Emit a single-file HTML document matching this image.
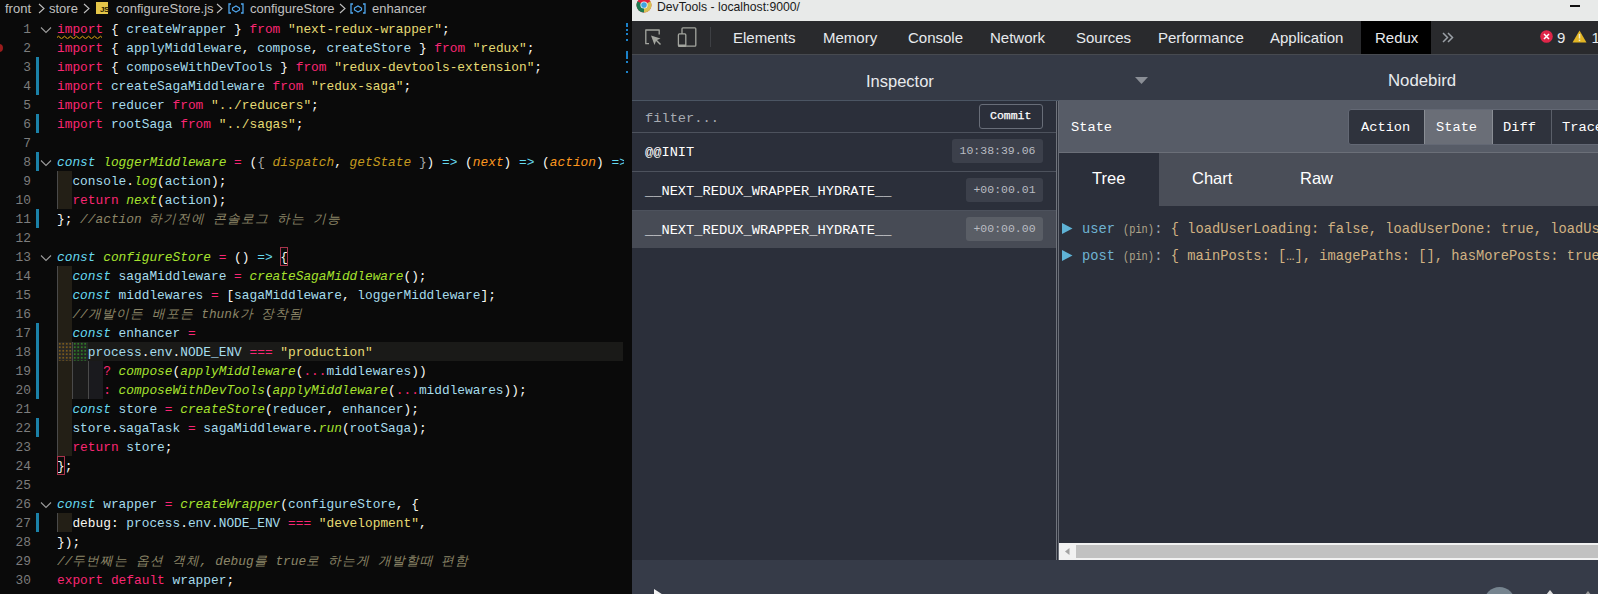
<!DOCTYPE html>
<html><head><meta charset="utf-8">
<style>
*{margin:0;padding:0;box-sizing:border-box}
html,body{width:1598px;height:594px;overflow:hidden;background:#0a0a0a;font-family:"Liberation Sans",sans-serif}
.abs{position:absolute}
#ed{position:absolute;left:0;top:0;width:632px;height:594px;background:#0a0a0a;overflow:hidden}
.crumb{position:absolute;top:0;height:17px;line-height:17px;font-size:13px;color:#c0c0c0;white-space:nowrap}
.ln{position:absolute;left:0;width:31px;text-align:right;font-family:"Liberation Mono",monospace;font-size:12.83px;color:#7d7d7d;height:19px;line-height:19px}
.cl{position:absolute;left:57px;width:567px;overflow:hidden;height:19px;line-height:19px;font-family:"Liberation Mono",monospace;font-size:12.83px;color:#f8f8f2;white-space:pre}
.k{color:#f92672}.s{color:#e6db74}.v{color:#a6dcec}.c{color:#66d9ef;font-style:italic}.f{color:#a6e22e;font-style:italic}.p{color:#fd971f;font-style:italic}.pd{color:#c49a1e;font-style:italic}.g{color:#a8a8a8}.o{color:#f92672}.a{color:#66d9ef}.cm{color:#8c8668;font-style:italic}.ko{letter-spacing:1px}.w{color:#f8f8f2}
.gb{position:absolute;left:36px;width:3px;background:#1b81a8}
.ig{position:absolute;left:57px;width:15px;height:19px;background:#231f16;border-left:1px solid #4a4a4a}
#dt{position:absolute;left:632px;top:0;width:966px;height:594px;background:#2b2f3a;overflow:hidden}
.tab{position:absolute;top:21px;height:33px;line-height:33px;font-size:15px;color:#e8eaed;white-space:nowrap}
.mono{font-family:"Liberation Mono",monospace}
</style></head><body>
<div id="ed">

<div class="crumb" style="left:5px">front</div>
<svg class="abs" style="left:38px;top:3px" width="7" height="11"><path d="M1 1 L6 5.5 L1 10" stroke="#c0c0c0" stroke-width="1.1" fill="none"/></svg>
<div class="crumb" style="left:49px">store</div>
<svg class="abs" style="left:83px;top:3px" width="7" height="11"><path d="M1 1 L6 5.5 L1 10" stroke="#c0c0c0" stroke-width="1.1" fill="none"/></svg>
<div class="abs" style="left:96px;top:2px;width:12px;height:12px;background:#e5c649"></div>
<div class="abs" style="left:100px;top:6px;font-size:8px;line-height:8px;color:#2a2200;font-weight:bold;letter-spacing:-0.5px">JS</div>
<div class="crumb" style="left:116px">configureStore.js</div>
<svg class="abs" style="left:216px;top:3px" width="7" height="11"><path d="M1 1 L6 5.5 L1 10" stroke="#c0c0c0" stroke-width="1.1" fill="none"/></svg>
<svg class="abs" style="left:228px;top:3px" width="16" height="11"><path d="M3 1 H1 V10 H3 M13 1 H15 V10 H13" stroke="#4fa6ed" stroke-width="1.3" fill="none"/><path d="M4.5 5 L8 3 L11.5 5 V7 L8 9 L4.5 7 Z" stroke="#4fa6ed" stroke-width="1.2" fill="none"/></svg>
<div class="crumb" style="left:250px">configureStore</div>
<svg class="abs" style="left:339px;top:3px" width="7" height="11"><path d="M1 1 L6 5.5 L1 10" stroke="#c0c0c0" stroke-width="1.1" fill="none"/></svg>
<svg class="abs" style="left:350px;top:3px" width="16" height="11"><path d="M3 1 H1 V10 H3 M13 1 H15 V10 H13" stroke="#4fa6ed" stroke-width="1.3" fill="none"/><path d="M4.5 5 L8 3 L11.5 5 V7 L8 9 L4.5 7 Z" stroke="#4fa6ed" stroke-width="1.2" fill="none"/></svg>
<div class="crumb" style="left:372px">enhancer</div>
<div class="abs" style="left:57px;top:342px;width:566px;height:19px;background:#1a1a18"></div>
<div class="ig" style="top:171px"></div>
<div class="ig" style="top:190px"></div>
<div class="ig" style="top:266px"></div>
<div class="ig" style="top:285px"></div>
<div class="ig" style="top:304px"></div>
<div class="ig" style="top:323px"></div>
<div class="ig" style="top:342px;background:#2a2824;background-image:radial-gradient(#7a5a1c 0.7px, transparent 0.9px);background-size:3.5px 3.5px"></div>
<div class="ig" style="top:361px"></div>
<div class="ig" style="top:380px"></div>
<div class="ig" style="top:399px"></div>
<div class="ig" style="top:418px"></div>
<div class="ig" style="top:437px"></div>
<div class="ig" style="top:513px"></div>
<div class="abs" style="left:72px;top:342px;width:16px;height:19px;background:#222422;background-image:radial-gradient(#2d7a26 0.7px, transparent 0.9px);background-size:3.5px 3.5px;border-left:1px solid #4a4a4a"></div>
<div class="abs" style="left:72px;top:361px;width:16px;height:19px;background:#1b1b1b;border-left:1px solid #4a4a4a"></div>
<div class="abs" style="left:72px;top:380px;width:16px;height:19px;background:#1b1b1b;border-left:1px solid #4a4a4a"></div>
<div class="abs" style="left:88px;top:361px;width:15px;height:19px;background:#1a1a1e;border-left:1px solid #4a4a4a"></div>
<div class="abs" style="left:88px;top:380px;width:15px;height:19px;background:#1a1a1e;border-left:1px solid #4a4a4a"></div>
<div class="gb" style="top:57px;height:38px"></div>
<div class="gb" style="top:114px;height:19px"></div>
<div class="gb" style="top:152px;height:19px"></div>
<div class="gb" style="top:209px;height:19px"></div>
<div class="gb" style="top:323px;height:76px"></div>
<div class="gb" style="top:418px;height:19px"></div>
<div class="gb" style="top:513px;height:19px"></div>
<svg class="abs" style="left:40px;top:26px" width="12" height="8"><path d="M1 1.5 L6 6.5 L11 1.5" stroke="#9c9c9c" stroke-width="1.1" fill="none"/></svg>
<svg class="abs" style="left:40px;top:159px" width="12" height="8"><path d="M1 1.5 L6 6.5 L11 1.5" stroke="#9c9c9c" stroke-width="1.1" fill="none"/></svg>
<svg class="abs" style="left:40px;top:254px" width="12" height="8"><path d="M1 1.5 L6 6.5 L11 1.5" stroke="#9c9c9c" stroke-width="1.1" fill="none"/></svg>
<svg class="abs" style="left:40px;top:501px" width="12" height="8"><path d="M1 1.5 L6 6.5 L11 1.5" stroke="#9c9c9c" stroke-width="1.1" fill="none"/></svg>
<div class="ln" style="top:20px">1</div>
<div class="cl" style="top:20px"><span class="k">import</span><span class="w"> { </span><span class="v">createWrapper</span><span class="w"> } </span><span class="k">from</span><span class="w"> </span><span class="s">"next-redux-wrapper"</span><span class="w">;</span></div>
<div class="ln" style="top:39px">2</div>
<div class="cl" style="top:39px"><span class="k">import</span><span class="w"> { </span><span class="v">applyMiddleware</span><span class="w">, </span><span class="v">compose</span><span class="w">, </span><span class="v">createStore</span><span class="w"> } </span><span class="k">from</span><span class="w"> </span><span class="s">"redux"</span><span class="w">;</span></div>
<div class="ln" style="top:58px">3</div>
<div class="cl" style="top:58px"><span class="k">import</span><span class="w"> { </span><span class="v">composeWithDevTools</span><span class="w"> } </span><span class="k">from</span><span class="w"> </span><span class="s">"redux-devtools-extension"</span><span class="w">;</span></div>
<div class="ln" style="top:77px">4</div>
<div class="cl" style="top:77px"><span class="k">import</span><span class="w"> </span><span class="v">createSagaMiddleware</span><span class="w"> </span><span class="k">from</span><span class="w"> </span><span class="s">"redux-saga"</span><span class="w">;</span></div>
<div class="ln" style="top:96px">5</div>
<div class="cl" style="top:96px"><span class="k">import</span><span class="w"> </span><span class="v">reducer</span><span class="w"> </span><span class="k">from</span><span class="w"> </span><span class="s">"../reducers"</span><span class="w">;</span></div>
<div class="ln" style="top:115px">6</div>
<div class="cl" style="top:115px"><span class="k">import</span><span class="w"> </span><span class="v">rootSaga</span><span class="w"> </span><span class="k">from</span><span class="w"> </span><span class="s">"../sagas"</span><span class="w">;</span></div>
<div class="ln" style="top:134px">7</div>
<div class="ln" style="top:153px">8</div>
<div class="cl" style="top:153px"><span class="c">const</span><span class="w"> </span><span class="f">loggerMiddleware</span><span class="w"> </span><span class="o">=</span><span class="w"> (</span><span class="g">{</span><span class="w"> </span><span class="pd">dispatch</span><span class="w">, </span><span class="pd">getState</span><span class="w"> </span><span class="g">}</span><span class="w">) </span><span class="a">=&gt;</span><span class="w"> (</span><span class="p">next</span><span class="w">) </span><span class="a">=&gt;</span><span class="w"> (</span><span class="p">action</span><span class="w">) </span><span class="a">=&gt;</span></div>
<div class="ln" style="top:172px">9</div>
<div class="cl" style="top:172px"><span class="w">  </span><span class="v">console</span><span class="w">.</span><span class="f">log</span><span class="w">(</span><span class="v">action</span><span class="w">);</span></div>
<div class="ln" style="top:191px">10</div>
<div class="cl" style="top:191px"><span class="w">  </span><span class="k">return</span><span class="w"> </span><span class="f">next</span><span class="w">(</span><span class="v">action</span><span class="w">);</span></div>
<div class="ln" style="top:210px">11</div>
<div class="cl" style="top:210px"><span class="w">}; </span><span class="cm">//action <span class="ko">하기전에</span> <span class="ko">콘솔로그</span> <span class="ko">하는</span> <span class="ko">기능</span></span></div>
<div class="ln" style="top:229px">12</div>
<div class="ln" style="top:248px">13</div>
<div class="cl" style="top:248px"><span class="c">const</span><span class="w"> </span><span class="f">configureStore</span><span class="w"> </span><span class="o">=</span><span class="w"> () </span><span class="a">=&gt;</span><span class="w"> </span><span class="w">{</span></div>
<div class="ln" style="top:267px">14</div>
<div class="cl" style="top:267px"><span class="w">  </span><span class="c">const</span><span class="w"> </span><span class="v">sagaMiddleware</span><span class="w"> </span><span class="o">=</span><span class="w"> </span><span class="f">createSagaMiddleware</span><span class="w">();</span></div>
<div class="ln" style="top:286px">15</div>
<div class="cl" style="top:286px"><span class="w">  </span><span class="c">const</span><span class="w"> </span><span class="v">middlewares</span><span class="w"> </span><span class="o">=</span><span class="w"> [</span><span class="v">sagaMiddleware</span><span class="w">, </span><span class="v">loggerMiddleware</span><span class="w">];</span></div>
<div class="ln" style="top:305px">16</div>
<div class="cl" style="top:305px"><span class="w">  </span><span class="cm">//<span class="ko">개발이든</span> <span class="ko">배포든</span> thunk<span class="ko">가</span> <span class="ko">장착됨</span></span></div>
<div class="ln" style="top:324px">17</div>
<div class="cl" style="top:324px"><span class="w">  </span><span class="c">const</span><span class="w"> </span><span class="v">enhancer</span><span class="w"> </span><span class="o">=</span></div>
<div class="ln" style="top:343px">18</div>
<div class="cl" style="top:343px"><span class="w">    </span><span class="v">process</span><span class="w">.</span><span class="v">env</span><span class="w">.</span><span class="v">NODE_ENV</span><span class="w"> </span><span class="o">===</span><span class="w"> </span><span class="s">"production"</span></div>
<div class="ln" style="top:362px">19</div>
<div class="cl" style="top:362px"><span class="w">      </span><span class="o">?</span><span class="w"> </span><span class="f">compose</span><span class="w">(</span><span class="f">applyMiddleware</span><span class="w">(</span><span class="o">...</span><span class="v">middlewares</span><span class="w">))</span></div>
<div class="ln" style="top:381px">20</div>
<div class="cl" style="top:381px"><span class="w">      </span><span class="o">:</span><span class="w"> </span><span class="f">composeWithDevTools</span><span class="w">(</span><span class="f">applyMiddleware</span><span class="w">(</span><span class="o">...</span><span class="v">middlewares</span><span class="w">));</span></div>
<div class="ln" style="top:400px">21</div>
<div class="cl" style="top:400px"><span class="w">  </span><span class="c">const</span><span class="w"> </span><span class="v">store</span><span class="w"> </span><span class="o">=</span><span class="w"> </span><span class="f">createStore</span><span class="w">(</span><span class="v">reducer</span><span class="w">, </span><span class="v">enhancer</span><span class="w">);</span></div>
<div class="ln" style="top:419px">22</div>
<div class="cl" style="top:419px"><span class="w">  </span><span class="v">store</span><span class="w">.</span><span class="v">sagaTask</span><span class="w"> </span><span class="o">=</span><span class="w"> </span><span class="v">sagaMiddleware</span><span class="w">.</span><span class="f">run</span><span class="w">(</span><span class="v">rootSaga</span><span class="w">);</span></div>
<div class="ln" style="top:438px">23</div>
<div class="cl" style="top:438px"><span class="w">  </span><span class="k">return</span><span class="w"> </span><span class="v">store</span><span class="w">;</span></div>
<div class="ln" style="top:457px">24</div>
<div class="cl" style="top:457px"><span class="w">};</span></div>
<div class="ln" style="top:476px">25</div>
<div class="ln" style="top:495px">26</div>
<div class="cl" style="top:495px"><span class="c">const</span><span class="w"> </span><span class="v">wrapper</span><span class="w"> </span><span class="o">=</span><span class="w"> </span><span class="f">createWrapper</span><span class="w">(</span><span class="v">configureStore</span><span class="w">, {</span></div>
<div class="ln" style="top:514px">27</div>
<div class="cl" style="top:514px"><span class="w">  </span><span class="w">debug</span><span class="w">: </span><span class="v">process</span><span class="w">.</span><span class="v">env</span><span class="w">.</span><span class="v">NODE_ENV</span><span class="w"> </span><span class="o">===</span><span class="w"> </span><span class="s">"development"</span><span class="w">,</span></div>
<div class="ln" style="top:533px">28</div>
<div class="cl" style="top:533px"><span class="w">});</span></div>
<div class="ln" style="top:552px">29</div>
<div class="cl" style="top:552px"><span class="cm">//<span class="ko">두번째는</span> <span class="ko">옵션</span> <span class="ko">객체</span>, debug<span class="ko">를</span> true<span class="ko">로</span> <span class="ko">하는게</span> <span class="ko">개발할때</span> <span class="ko">편함</span></span></div>
<div class="ln" style="top:571px">30</div>
<div class="cl" style="top:571px"><span class="k">export</span><span class="w"> </span><span class="k">default</span><span class="w"> </span><span class="v">wrapper</span><span class="w">;</span></div>
<div class="abs" style="left:279.8px;top:247px;width:8px;height:19px;border:1px solid #a8344c"></div>
<div class="abs" style="left:56.5px;top:456px;width:8px;height:19px;border:1px solid #a8344c"></div>
<svg class="abs" style="left:57px;top:35px" width="47" height="4"><path d="M0 2.5 Q1.5 0 3 2.5 T6 2.5 T9 2.5 T12 2.5 T15 2.5 T18 2.5 T21 2.5 T24 2.5 T27 2.5 T30 2.5 T33 2.5 T36 2.5 T39 2.5 T42 2.5 T45 2.5" stroke="#e5ab10" stroke-width="1" fill="none"/></svg>
<div class="abs" style="left:-5.5px;top:44px;width:8px;height:7.5px;border-radius:4px;background:#9a1c1c"></div>
<div class="abs" style="left:626px;top:23px;width:2px;height:4px;background:#1b81c8"></div>
<div class="abs" style="left:626px;top:29px;width:2px;height:2px;background:#1b81c8"></div>
<div class="abs" style="left:626px;top:33px;width:2px;height:2px;background:#1b81c8"></div>
<div class="abs" style="left:626px;top:39px;width:2px;height:2px;background:#1b81c8"></div>
<div class="abs" style="left:626px;top:51px;width:2px;height:8px;background:#1b81c8"></div>
<div class="abs" style="left:626px;top:61px;width:2px;height:2px;background:#1b81c8"></div>
<div class="abs" style="left:626px;top:71px;width:2px;height:2px;background:#1b81c8"></div>
</div>
<div id="dt">
<div class="abs" style="left:0px;top:0px;width:966px;height:21px;background:#e8eae9;"></div>
<svg class="abs" style="left:3.5px;top:-3.5px" width="16" height="16" viewBox="0 0 16 16"><circle cx="8" cy="8" r="7.5" fill="#e0213a"/><path d="M8 8 L1.5 4.2 A7.5 7.5 0 0 0 8 15.5 Z" fill="#1c7a52"/><path d="M8 8 L8 15.5 A7.5 7.5 0 0 0 14.5 4.2 Z" fill="#d6c154"/><circle cx="8" cy="8" r="3.6" fill="#f4f4f4"/><circle cx="8" cy="8" r="2.8" fill="#3ea3df"/></svg>
<div class="abs" style="left:25px;top:0px;font-size:12.2px;line-height:14px;color:#1a1a1a;white-space:pre;">DevTools - localhost:9000/</div>
<div class="abs" style="left:938px;top:5px;width:10px;height:1.5px;background:#111;"></div>
<div class="abs" style="left:0px;top:21px;width:966px;height:33px;background:#292a2d;"></div>
<div class="abs" style="left:0px;top:54px;width:966px;height:1px;background:#474a50;"></div>
<svg class="abs" style="left:12px;top:28px" width="18" height="18"><path d="M5 15.7 H1.8 V2 H15.2 V6.5" stroke="#a3a59f" stroke-width="1.3" fill="none" stroke-linejoin="round"/><path d="M7 7.5 L16.5 10.5 L13 12 L17 16 L16 17 L12 13 L10.5 17 Z" fill="#a3a59f"/></svg>
<svg class="abs" style="left:45px;top:27px" width="20" height="21"><rect x="5" y="0.8" width="13.8" height="18.4" rx="1" stroke="#a3a59f" stroke-width="1.3" fill="none"/><rect x="1.4" y="6.9" width="7.4" height="12.4" rx="1" stroke="#a3a59f" stroke-width="1.3" fill="#292a2d"/><rect x="1" y="17.5" width="8" height="2" fill="#a3a59f"/></svg>
<div class="abs" style="left:78px;top:27px;width:1px;height:20px;background:#3e4044;"></div>
<div class="abs" style="left:101px;top:29px;font-size:15px;line-height:18px;color:#e8eaed;white-space:pre;">Elements</div>
<div class="abs" style="left:191px;top:29px;font-size:15px;line-height:18px;color:#e8eaed;white-space:pre;">Memory</div>
<div class="abs" style="left:276px;top:29px;font-size:15px;line-height:18px;color:#e8eaed;white-space:pre;">Console</div>
<div class="abs" style="left:358px;top:29px;font-size:15px;line-height:18px;color:#e8eaed;white-space:pre;">Network</div>
<div class="abs" style="left:444px;top:29px;font-size:15px;line-height:18px;color:#e8eaed;white-space:pre;">Sources</div>
<div class="abs" style="left:526px;top:29px;font-size:15px;line-height:18px;color:#e8eaed;white-space:pre;">Performance</div>
<div class="abs" style="left:638px;top:29px;font-size:15px;line-height:18px;color:#e8eaed;white-space:pre;">Application</div>
<div class="abs" style="left:729px;top:21px;width:70px;height:33px;background:#000;"></div>
<div class="abs" style="left:743px;top:29px;font-size:15px;line-height:18px;color:#e8eaed;white-space:pre;">Redux</div>
<svg class="abs" style="left:810px;top:32px" width="12" height="11"><path d="M1 1 L5.5 5.5 L1 10 M6 1 L10.5 5.5 L6 10" stroke="#9aa0a6" stroke-width="1.5" fill="none"/></svg>
<svg class="abs" style="left:908px;top:29.8px" width="13" height="13"><circle cx="6.5" cy="6.5" r="6.3" fill="#e02649"/><path d="M4 4 L9 9 M9 4 L4 9" stroke="#fff" stroke-width="1.5"/></svg>
<div class="abs" style="left:925px;top:29px;font-size:15px;line-height:18px;color:#e8eaed;white-space:pre;">9</div>
<svg class="abs" style="left:940px;top:30px" width="15" height="13"><path d="M7.5 0.5 L14.5 12.5 H0.5 Z" fill="#e2b524"/><path d="M7.5 4 V8.5" stroke="#f3ecd0" stroke-width="1.5"/><rect x="6.75" y="9.6" width="1.5" height="1.5" fill="#f3ecd0"/></svg>
<div class="abs" style="left:959.5px;top:29px;font-size:15px;line-height:18px;color:#e8eaed;white-space:pre;">1</div>
<div class="abs" style="left:0px;top:55px;width:966px;height:45px;background:#353a46;"></div>
<div class="abs" style="left:234px;top:71px;font-size:16.5px;line-height:20px;color:#e8eaed;white-space:pre;">Inspector</div>
<svg class="abs" style="left:503px;top:77px" width="13" height="8"><path d="M0 0 H13 L6.5 7 Z" fill="#8a8e96"/></svg>
<div class="abs" style="left:756px;top:71px;font-size:16.8px;line-height:20px;color:#e8eaed;white-space:pre;">Nodebird</div>
<div class="abs" style="left:0px;top:100px;width:966px;height:1px;background:#4b5563;"></div>
<div class="abs" style="left:0px;top:101px;width:424px;height:459px;background:#2b2f3a;"></div>
<div class="abs mono" style="left:13px;top:109.5px;font-size:13.7px;line-height:18px;color:#a7abb2">filter...</div>
<div class="abs" style="left:347px;top:104px;width:64px;height:25px;border:1px solid #686d78;border-radius:3px;background:#2b2f3a"></div>
<div class="abs mono" style="left:358px;top:108px;font-size:11.5px;line-height:16px;color:#fff;-webkit-text-stroke:0.25px #fff">Commit</div>
<div class="abs" style="left:0px;top:132px;width:424px;height:1px;background:#4d525d;"></div>
<div class="abs mono" style="left:13px;top:143.5px;font-size:13.7px;line-height:18px;color:#fff">@@INIT</div>
<div class="abs" style="left:320px;top:139px;width:91px;height:24px;border-radius:3px;background:#3c404b"></div>
<div class="abs mono" style="left:320px;top:143px;width:91px;text-align:center;font-size:11.5px;line-height:16px;color:#b9bcc2">10:38:39.06</div>
<div class="abs" style="left:0px;top:171px;width:424px;height:1px;background:#4d525d;"></div>
<div class="abs mono" style="left:13px;top:182.5px;font-size:13.7px;line-height:18px;color:#fff">__NEXT_REDUX_WRAPPER_HYDRATE__</div>
<div class="abs" style="left:334px;top:178px;width:77px;height:24px;border-radius:3px;background:#3c404b"></div>
<div class="abs mono" style="left:334px;top:182px;width:77px;text-align:center;font-size:11.5px;line-height:16px;color:#b9bcc2">+00:00.01</div>
<div class="abs" style="left:0px;top:210px;width:424px;height:1px;background:#4d525d;"></div>
<div class="abs" style="left:0px;top:211px;width:424px;height:37px;background:#474b55;"></div>
<div class="abs mono" style="left:13px;top:221.5px;font-size:13.7px;line-height:18px;color:#fff">__NEXT_REDUX_WRAPPER_HYDRATE__</div>
<div class="abs" style="left:334px;top:217px;width:77px;height:24px;border-radius:3px;background:#5a5e66"></div>
<div class="abs mono" style="left:334px;top:221px;width:77px;text-align:center;font-size:11.5px;line-height:16px;color:#b9bcc2">+00:00.00</div>
<div class="abs" style="left:424px;top:101px;width:3px;height:459px;background:#2b2f3a;"></div>
<div class="abs" style="left:424px;top:101px;width:1px;height:459px;background:#70747c;"></div>
<div class="abs" style="left:426px;top:101px;width:1px;height:459px;background:#6a6e77;"></div>
<div class="abs" style="left:427px;top:100px;width:539px;height:53px;background:#575c67;"></div>
<div class="abs mono" style="left:439px;top:118.5px;font-size:13.7px;line-height:18px;color:#fff">State</div>
<div class="abs" style="left:715.5px;top:108.5px;width:262px;height:36px;border:1px solid #636874;border-radius:3px;background:#2f333d;overflow:hidden"><div class="abs" style="left:75px;top:0;width:69px;height:36px;background:#6a6e77;border-left:1px solid #8a8e95;border-right:1px solid #8a8e95"></div><div class="abs" style="left:202px;top:0;width:1px;height:36px;background:#5a5f69"></div></div>
<div class="abs mono" style="left:729px;top:118.5px;font-size:13.7px;line-height:18px;color:#fff">Action</div>
<div class="abs mono" style="left:804px;top:118.5px;font-size:13.7px;line-height:18px;color:#fff">State</div>
<div class="abs mono" style="left:871px;top:118.5px;font-size:13.7px;line-height:18px;color:#fff">Diff</div>
<div class="abs mono" style="left:930px;top:118.5px;font-size:13.7px;line-height:18px;color:#fff">Trace</div>
<div class="abs" style="left:427px;top:152px;width:539px;height:1px;background:#6b6f78;"></div>
<div class="abs" style="left:427px;top:153px;width:539px;height:53px;background:#4a4e58;"></div>
<div class="abs" style="left:427px;top:153px;width:100px;height:53px;background:#2b2f3a;"></div>
<div class="abs" style="left:460px;top:168px;font-size:16.5px;line-height:20px;color:#fff;white-space:pre;">Tree</div>
<div class="abs" style="left:560px;top:168px;font-size:16.5px;line-height:20px;color:#fff;white-space:pre;">Chart</div>
<div class="abs" style="left:668px;top:168px;font-size:16.5px;line-height:20px;color:#fff;white-space:pre;">Raw</div>
<svg class="abs" style="left:430px;top:223px" width="11" height="11"><path d="M0 0 L10.5 5.5 L0 11 Z" fill="#5fb3d6"/></svg>
<div class="abs mono" style="left:450px;top:221px;font-size:13.75px;line-height:18px;white-space:pre;color:#d1b282"><span style="color:#6fb3d2">user </span><span style="display:inline-block;width:31px;overflow:visible;vertical-align:baseline"><span style="display:inline-block;font-size:12px;color:#b0a58a;transform:scaleX(0.86);transform-origin:0 0">(pin)</span></span><span style="color:#a0a8b5">: </span>{ loadUserLoading: false, loadUserDone: true, loadUserError: null</div>
<svg class="abs" style="left:430px;top:250px" width="11" height="11"><path d="M0 0 L10.5 5.5 L0 11 Z" fill="#5fb3d6"/></svg>
<div class="abs mono" style="left:450px;top:248px;font-size:13.75px;line-height:18px;white-space:pre;color:#d1b282"><span style="color:#6fb3d2">post </span><span style="display:inline-block;width:31px;overflow:visible;vertical-align:baseline"><span style="display:inline-block;font-size:12px;color:#b0a58a;transform:scaleX(0.86);transform-origin:0 0">(pin)</span></span><span style="color:#a0a8b5">: </span>{ mainPosts: […], imagePaths: [], hasMorePosts: true, loadPostsLoading</div>
<div class="abs" style="left:427px;top:543px;width:539px;height:17px;background:#f1f1f1;"></div>
<div class="abs" style="left:444px;top:545px;width:522px;height:13px;background:#c1c1c1;"></div>
<svg class="abs" style="left:433px;top:548px" width="5" height="7"><path d="M4.5 0 V7 L0 3.5 Z" fill="#a3a3a3"/></svg>
<div class="abs" style="left:0px;top:560px;width:966px;height:34px;background:#363b48;"></div>
<svg class="abs" style="left:22px;top:589px" width="15" height="6"><path d="M0 0 L14 9 L0 18 Z" fill="#f3f3f3"/></svg>
<div class="abs" style="left:851.5px;top:587px;width:31px;height:31px;border-radius:16px;background:#76848f"></div>
<svg class="abs" style="left:914px;top:590px" width="8" height="5"><path d="M0 5 L4 0 L8 5 Z" fill="#e0e0e0"/></svg>
<svg class="abs" style="left:952px;top:590.5px" width="8" height="5"><path d="M0 5 L4 0 L8 5 Z" fill="#9a9a9a"/></svg>
</div>
</body></html>
